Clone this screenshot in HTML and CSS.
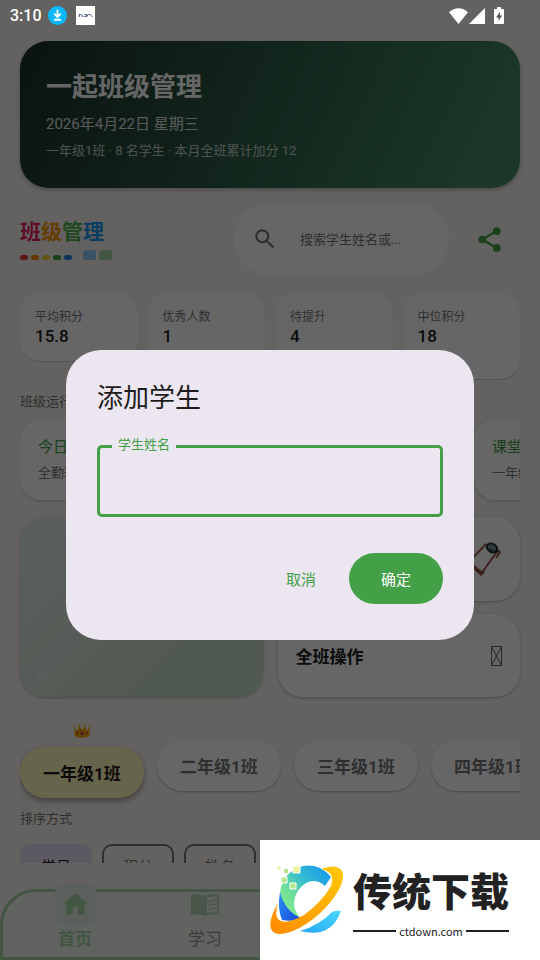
FILE: index.html
```html
<!DOCTYPE html>
<html lang="zh-CN">
<head>
<meta charset="utf-8">
<meta name="viewport" content="width=device-width, initial-scale=1">
<title>一起班级管理</title>
<link rel="stylesheet" href="styles.css">
</head>
<body>
<div class="app">
  <header class="status">
    <span class="time">3:10</span>
    <svg class="status-app" viewBox="0 0 20 20"><circle cx="10" cy="10" r="10" fill="#08b8fa"/><path d="M10 4v7M6.500 8l3.500 3.500L13.500 8M6.500 14.500h7" fill="none" stroke="#fff" stroke-width="2"/></svg>
    <svg class="status-app" viewBox="0 0 20 20"><path fill="#fff" d="M0 0h20v20H0z"/><path d="M3.500 9v2.500M3 9h2.500M6.500 9v2H8M9 9h2v2H9M12 9v2M13 9h2l2.500 2.500" fill="none" stroke="#20386b" stroke-width=".9"/></svg>
    <span class="spacer"></span>
    <svg class="wifi" viewBox="0 0 20 17"><path fill="#fff" d="M10 17 0 4.500C6-1 14-1 20 4.500z"/></svg>
    <svg class="signal" viewBox="0 0 17 17"><path fill="#fff" d="M17 0v17H0z"/></svg>
    <svg class="battery" viewBox="0 0 10 17"><path fill="#fff" d="M3 0h4v2h2q1 0 1 1v13q0 1-1 1H1q-1 0-1-1V3q0-1 1-1h2z"/><path fill="#555" d="M6 5 2 10.500h2.500V14L8 8.500H6z"/></svg>
  </header>

  <main class="content">
    <section class="hero">
      <h1>一起班级管理</h1>
      <p class="date">2026年4月22日 星期三</p>
      <p class="summary">一年级1班 · 8 名学生 · 本月全班累计加分 12</p>
    </section>

    <div class="toolbar">
      <div class="brand">
        <div class="brand-name"><span class="pink">班</span><span class="orange">级</span><span class="green">管</span><span class="blue">理</span></div>
        <div class="brand-marks"><i class="dot red"></i><i class="dot amber"></i><i class="dot yellow"></i><i class="dot leaf"></i><i class="dot sky"></i><i class="tile tile-blue"></i><i class="tile tile-green"></i></div>
      </div>
      <label class="search">
        <svg viewBox="0 0 24 24"><path fill="#777" d="M15.500 14h-.79l-.28-.27A6.470 6.470 0 0 0 16 9.500 6.500 6.500 0 1 0 9.500 16c1.610 0 3.090-.59 4.230-1.570l.27.28v.79l5 4.990L20.490 19zm-6 0a4.500 4.500 0 1 1 0-9 4.500 4.500 0 0 1 0 9z"/></svg>
        <input type="text" placeholder="搜索学生姓名或..." aria-label="搜索">
      </label>
      <button class="share" aria-label="分享"><svg viewBox="0 0 24 24"><path d="M18 5 6 12l12 7" fill="none" stroke="#43a047" stroke-width="2"/><g fill="#43a047"><circle cx="18" cy="5" r="3.200"/><circle cx="6" cy="12" r="3.200"/><circle cx="18" cy="19" r="3.200"/></g></svg></button>
    </div>

    <div class="stats">
      <div class="stat short"><span>平均积分</span><strong>15.8</strong></div>
      <div class="stat"><span>优秀人数</span><strong>1</strong></div>
      <div class="stat"><span>待提升</span><strong>4</strong></div>
      <div class="stat"><span>中位积分</span><strong>18</strong></div>
    </div>

    <h2 class="section-label">班级运行</h2>
    <div class="strip">
      <article class="news"><h3>今日</h3><p>全勤班</p></article>
      <article class="news"></article>
      <article class="news"><h3>课堂表现</h3><p>一年级1班</p></article>
    </div>

    <div class="actions">
      <div class="action feature"><i class="bubble"></i></div>
      <div class="action"><span class="spacer"></span>
        <svg class="clipboard" viewBox="0 0 34 36"><path d="M17.500 3.500 1 21l13 10.500L29.500 10z" fill="#fff" stroke="#a05c50" stroke-width="2"/><path d="m2 23 11 10 3-3" fill="none" stroke="#8d4f45" stroke-width="3"/><path d="m29 9 3 2-4 6" fill="none" stroke="#8d4f45" stroke-width="2"/><ellipse cx="24" cy="7" rx="5.500" ry="4" transform="rotate(28 24 7)" fill="#78909c" stroke="#16252b" stroke-width="2"/><path d="m19 5 3-3 6 2M20 8l7 3" fill="none" stroke="#37474f" stroke-width="1.500"/></svg>
      </div>
      <div class="action"><span>全班操作</span><span class="spacer"></span>
        <svg class="missing" viewBox="0 0 11 20"><path d="M.5.5h10v19H.5zL10.500 19.500M10.500.5.500 19.500" fill="none" stroke="#444" stroke-width=".8"/></svg>
      </div>
    </div>

    <div class="classes">
      <div class="class-item current">
        <svg class="crown" viewBox="0 0 18 14"><path fill="#f2a600" d="m1 3 3 4 2-5 3 4 3-4 2 5 3-4-1 9q-7 4-14 0z"/><g fill="#ffc928"><circle cx="1" cy="2" r="1"/><circle cx="6" cy="1" r="1"/><circle cx="9" cy="1" r="1"/><circle cx="12" cy="1" r="1"/><circle cx="17" cy="2" r="1"/></g><circle cx="9" cy="9.500" r="1.500" fill="#9c2bb0"/><circle cx="4" cy="9" r="1" fill="#d32f2f"/><circle cx="14" cy="9" r="1" fill="#d32f2f"/></svg>
        <button class="class-chip">一年级1班</button>
      </div>
      <div class="class-item"><button class="class-chip">二年级1班</button></div>
      <div class="class-item"><button class="class-chip">三年级1班</button></div>
      <div class="class-item"><button class="class-chip">四年级1班</button></div>
    </div>

    <h2 class="section-label sort-label">排序方式</h2>
    <div class="sorts">
      <button class="sort chosen">学号</button><button class="sort">积分</button><button class="sort">姓名</button>
    </div>
  </main>

  <nav class="tabs">
    <a class="tab active" href="#home"><span class="plate"><svg viewBox="0 0 24 24"><path fill="#a5d6a7" d="M10 20v-6h4v6h5v-8h3L12 3 2 12h3v8z"/></svg></span>首页</a>
    <a class="tab" href="#study"><span class="plate"><svg viewBox="0 0 30 24"><path fill="#b7d6b9" d="M15 3Q8-.5 1 2v20q7-2 14 1 7-3 14-1V2Q22-.5 15 3z"/><path fill="#eff7f0" d="M17 5q5-2.500 10-1.500v16q-5-1-10 1z"/><path d="M18.500 8.500q4-1.500 7-1m-7 5q4-1.500 7-1m-7 5q4-1.500 7-1" fill="none" stroke="#b7d6b9" stroke-width="1.500"/></svg></span>学习</a>
  </nav>

  <div class="scrim">
    <form class="dialog" role="dialog" aria-labelledby="dialog-title">
      <h2 id="dialog-title">添加学生</h2>
      <div class="field"><input id="student" type="text"><label for="student">学生姓名</label></div>
      <div class="buttons"><button type="button" class="cancel">取消</button><button type="button" class="confirm">确定</button></div>
    </form>
  </div>

  <aside class="sponsor">
    <svg class="sponsor-logo" viewBox="0 0 76 72">
      <defs>
        <linearGradient id="c" x1="0" y1="1" x2="1" y2="0"><stop stop-color="#8ff08c"/><stop offset=".35" stop-color="#6fe09a"/><stop offset=".6" stop-color="#35bcd0"/><stop offset="1" stop-color="#0e93ee"/></linearGradient>
        <linearGradient id="o" x1="0" y1="1" x2="1" y2="0"><stop stop-color="#ff8a00"/><stop offset="1" stop-color="#ffc906"/></linearGradient>
        <linearGradient id="b" x1="0" y1="0" x2="1" y2="1"><stop stop-color="#2b93f2"/><stop offset="1" stop-color="#1b45df"/></linearGradient>
        <linearGradient id="s" x1="0" y1="1" x2="1" y2="0"><stop stop-color="#2aa5f5"/><stop offset="1" stop-color="#45d8ff"/></linearGradient>
      </defs>
      <path fill="url(#c)" d="M62 13Q51-1 34 2 17 7 12 23q-2 8 0 18 7 14 22 15-9-7-9-17 1-13 12-20 10-5 19 3z"/>
      <path fill="url(#b)" d="M11 28Q8 44 13 56q9 2 21-1Q16 48 11 28z"/>
      <path fill="url(#s)" d="M31 67q31 8 41-20-5-1-9 1Q51 61 31 67z"/>
      <path fill="url(#o)" d="M52 5Q68-1 73 7q4 9-7 25Q49 56 24 67 6 74 2 65q-3-9 7-26-4 13 1 17 7 5 25-5Q53 38 62 22q5-14-10-17z"/>
      <g stroke="#fff"><path fill="#e8f09a" d="M24 2h7v7h-7z"/><path fill="#b5e68a" d="M14.500 4.500h5v5h-5zM12 13h6v6h-6zM21 19h6v6h-6z"/><path fill="#e8ef9c" d="M8 2h4v4H8z"/></g>
    </svg>
    <div class="sponsor-text"><strong>传统下载</strong><div class="domain">ctdown.com</div></div>
  </aside>
</div>
</body>
</html>
```
FILE: styles.css
```css
* { box-sizing: border-box; }
body, h1, h2, h3, p { margin: 0; }
body {
  font-family: Roboto, "Noto Sans CJK SC", sans-serif;
  background: #faf5f0;
  color: #1c1c1c;
}
button, input { font: inherit; border: 0; padding: 0; background: none; }
svg { display: block; flex: none; }
.spacer { flex: 1; }

.app {
  position: relative;
  height: 100vh;
  display: flex;
  flex-direction: column;
  overflow: hidden;
}

/* Status bar stays bright above the scrim */
.status {
  position: relative;
  z-index: 3;
  display: flex;
  align-items: center;
  gap: 9px;
  height: 31px;
  flex: none;
  padding: 0 36px 0 10px;
  color: #fff;
}
.time { font-size: 16px; line-height: 20px; font-weight: 500; width: 29px; }
.status-app { width: 19px; height: 19px; }
.wifi { width: 19px; height: 16px; }
.signal { width: 16px; height: 16px; margin-left: -8px; }
.battery { width: 10px; height: 17px; }

.content { flex: 1; min-height: 0; overflow: hidden; padding: 10px 20px 0; }

.hero {
  padding: 27px 26px;
  border-radius: 28px;
  background: linear-gradient(115deg, #1b3028, #2f6049 50%, #438a66 90%);
  box-shadow: 0 2px 4px rgba(0, 0, 0, .25);
  color: #fff;
}
.hero h1 { font-size: 26px; line-height: 38px; font-weight: 700; }
.date { font-size: 15px; line-height: 20px; margin-top: 8px; opacity: .85; }
.summary { font-size: 13px; line-height: 20px; margin-top: 7px; opacity: .7; }

.toolbar { display: flex; align-items: center; margin-top: 15px; height: 72px; }
.brand { width: 214px; flex: none; }
.brand-name { font-size: 21px; line-height: 28px; font-weight: 700; }
.pink { color: #e91e63; }
.orange { color: #ff9800; }
.green { color: #4caf50; }
.blue { color: #2196f3; }
.brand-marks { display: flex; align-items: flex-end; gap: 3px; margin-top: 4px; height: 10px; }
.dot { width: 8px; height: 5px; border-radius: 3px; }
.red { background: #e53935; }
.amber { background: #fb8c00; }
.yellow { background: #fdd835; }
.leaf { background: #43a047; }
.sky { background: #1e88e5; }
.tile { width: 13px; height: 10px; border-radius: 3px; }
.tile-blue { background: #90caf9; margin-left: 8px; }
.tile-green { background: #a5d6a7; }
.search {
  flex: 1;
  min-width: 0;
  height: 72px;
  border-radius: 36px;
  background: #fff;
  display: flex;
  align-items: center;
  padding: 0 18px;
}
.search svg { width: 26px; height: 26px; margin-right: 22px; }
.search input { flex: 1; min-width: 0; font-size: 13px; outline: 0; }
.search input::placeholder { color: #777; opacity: 1; }
.share { width: 71px; padding-left: 26px; }
.share svg { width: 29px; height: 29px; }

.stats { display: grid; grid-template-columns: repeat(4, 1fr); gap: 10px; margin-top: 18px; height: 86px; }
.stat {
  background: #fff;
  border-radius: 20px;
  padding: 15px;
  box-shadow: 0 1px 1px rgba(0, 0, 0, .15);
  display: flex;
  flex-direction: column;
}
.short { height: 68px; }
.stat span { font-size: 12px; line-height: 18px; color: #777; }
.stat strong { font-size: 17px; line-height: 20px; font-weight: 500; }

.section-label { font-size: 13px; line-height: 20px; font-weight: 400; color: #777; margin-top: 13px; }

.strip { display: flex; gap: 10px; overflow: hidden; margin-top: 7px; padding-bottom: 6px; }
.news {
  width: 217px;
  height: 81px;
  flex: none;
  border-radius: 21px;
  background: #fff;
  padding: 18px;
  box-shadow: 0 1px 3px rgba(0, 0, 0, .2);
}
.news h3 { font-size: 15px; line-height: 20px; font-weight: 400; color: #43a047; }
.news p { font-size: 13px; line-height: 20px; margin-top: 6px; color: #777; }

.actions {
  display: grid;
  grid-template-columns: 1fr 1fr;
  grid-template-rows: 84px 83px;
  gap: 13px 15px;
  margin-top: 11px;
}
.action {
  background: #fff;
  border-radius: 25px;
  box-shadow: 0 1px 3px rgba(0, 0, 0, .25);
  display: flex;
  align-items: center;
  padding: 0 18px;
  font-size: 17px;
  font-weight: 700;
}
.feature {
  grid-row: span 2;
  align-items: flex-end;
  padding: 15px;
  background: linear-gradient(135deg, #e3eeee, #dbe8dd 35%, #c8e0cb 75%);
}
.bubble { width: 11px; height: 11px; border-radius: 50%; background: #dceadf; }
.clipboard { width: 34px; height: 36px; }
.missing { width: 11px; height: 20px; }

.classes { display: flex; gap: 13px; overflow: hidden; padding: 26px 0 8px; }
.class-item { flex: none; padding-top: 17px; }
.class-chip {
  display: block;
  width: 124px;
  height: 51px;
  border-radius: 26px;
  background: #fff;
  color: #777;
  font-size: 17px;
  font-weight: 700;
  box-shadow: 0 1px 2px rgba(0, 0, 0, .25);
}
.current { padding-top: 0; }
.crown { width: 18px; height: 14px; margin: 1px auto 9px; }
.current .class-chip { background: #fff9b8; color: #1c1c1c; box-shadow: 0 3px 6px rgba(0, 0, 0, .35); }
.sort-label { margin-top: 3px; }
.sorts { display: flex; gap: 10px; margin-top: 15px; }
.sort {
  width: 72px;
  height: 42px;
  border: 2px solid #79747e;
  border-radius: 10px;
  color: #777;
  font-size: 15px;
}
.chosen { background: #e8def8; border-color: #e8def8; color: #1c1c1c; }

.tabs {
  flex: none;
  height: 71px;
  margin-top: 26px;
  padding: 0 7px;
  border: 3px solid #a5d6a7;
  border-radius: 36px 36px 0 0;
  background: #eff7f0;
  display: grid;
  grid-template-columns: repeat(4, 1fr);
}
.tab {
  display: flex;
  flex-direction: column;
  align-items: center;
  margin-top: -8px;
  color: #999;
  font-size: 17px;
  line-height: 24px;
  text-decoration: none;
}
.plate { width: 41px; height: 41px; margin-bottom: 2px; border-radius: 8px; display: grid; place-items: center; }
.plate svg { width: 30px; height: 24px; }
.active { color: #a5d6a7; font-weight: 700; }
.active .plate { background: #e6f1e7; }
.active .plate svg { width: 31px; height: 31px; }

/* Modal layer */
.scrim {
  position: absolute;
  inset: 0;
  z-index: 2;
  display: grid;
  place-items: center;
  padding: 30px 66px 0;
  background: rgba(0, 0, 0, .6);
}
.dialog { width: 100%; padding: 31px; border-radius: 35px; background: #ece6f1; }
.dialog h2 { font-size: 26px; line-height: 34px; font-weight: 400; }
.field { position: relative; margin-top: 30px; }
.field input {
  display: block;
  width: 100%;
  height: 72px;
  padding: 0 18px;
  border: 3px solid #43a047;
  border-radius: 5px;
  font-size: 18px;
  outline: 0;
}
.field label {
  position: absolute;
  top: -9px;
  left: 15px;
  padding: 0 6px;
  background: #ece6f1;
  color: #43a047;
  font-size: 13px;
  line-height: 18px;
}
.buttons { display: flex; justify-content: flex-end; gap: 15px; margin: 36px 0 5px; font-size: 15px; }
.buttons button { height: 51px; border-radius: 26px; }
.cancel { width: 66px; color: #43a047; }
.confirm { width: 94px; color: #fff; }
.buttons .confirm { background: #43a047; }

.sponsor {
  position: absolute;
  right: 0;
  bottom: 0;
  z-index: 4;
  display: flex;
  align-items: center;
  gap: 8px;
  width: 280px;
  height: 120px;
  padding-left: 9px;
  background: #fff;
  color: #222;
}
.sponsor-logo { width: 76px; height: 72px; }
.sponsor-text { padding-top: 6px; }
.sponsor-text strong { display: block; font-size: 39px; line-height: 52px; font-weight: 900; }
.domain {
  display: flex;
  align-items: center;
  gap: 3px;
  margin-top: 4px;
  font-family: "Noto Sans CJK SC", sans-serif;
  font-size: 11px;
  line-height: 16px;
}
.domain::before, .domain::after { content: ""; flex: 1; height: 2px; background: #222; }
```
